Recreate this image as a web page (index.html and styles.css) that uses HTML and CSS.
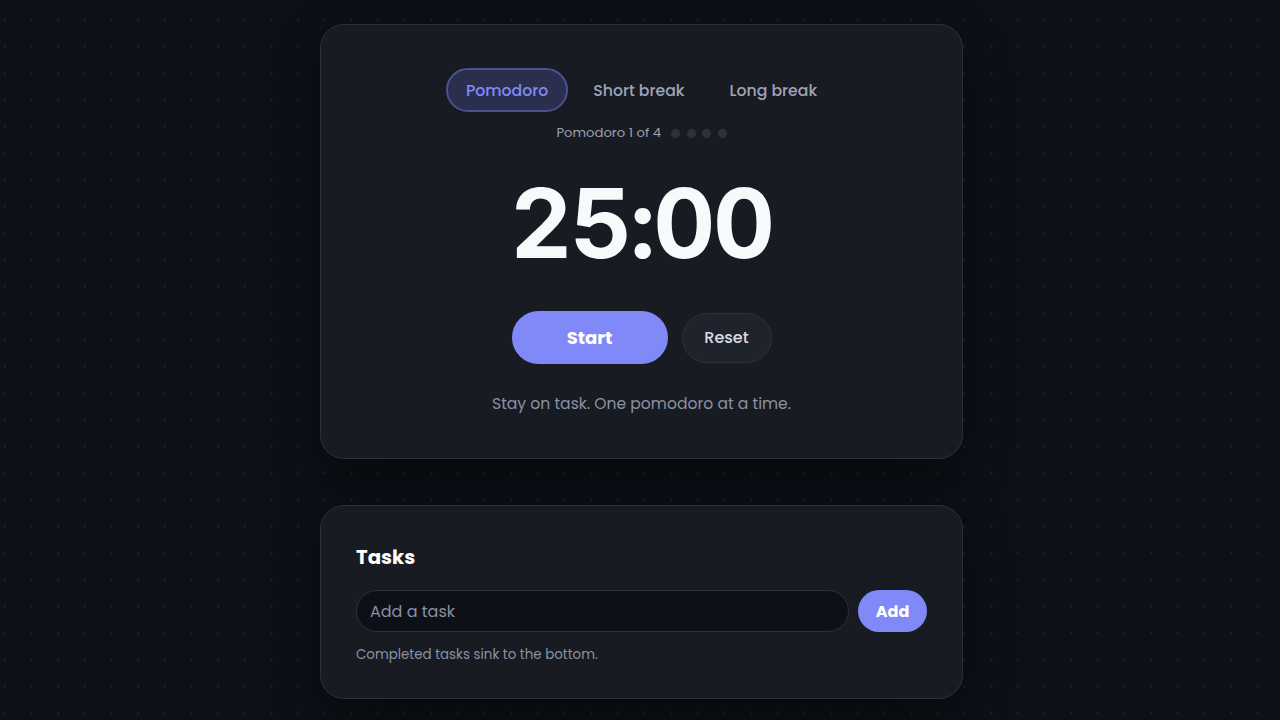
FILE: index.html
```html
<!DOCTYPE html>
<html lang="en">
<head>
<meta charset="utf-8">
<title>Pomodoro</title>
<link rel="stylesheet" href="styles.css">
</head>
<body>
<main class="page">
  <section class="card timer-card">
    <nav class="tabs">
      <button class="tab active">Pomodoro</button>
      <button class="tab">Short break</button>
      <button class="tab">Long break</button>
    </nav>
    <div class="progress">
      <span class="progress-label">Pomodoro 1 of 4</span>
      <span class="dots"><i class="dot"></i><i class="dot"></i><i class="dot"></i><i class="dot"></i></span>
    </div>
    <div class="time">25:00</div>
    <div class="controls">
      <button class="btn-start">Start</button>
      <button class="btn-reset">Reset</button>
    </div>
    <p class="tagline">Stay on task. One pomodoro at a time.</p>
  </section>

  <section class="card tasks-card">
    <h2 class="tasks-title">Tasks</h2>
    <form class="task-form">
      <input class="task-input" type="text" placeholder="Add a task">
      <button class="btn-add" type="button">Add</button>
    </form>
    <p class="hint">Completed tasks sink to the bottom.</p>
  </section>
</main>
</body>
</html>
```
FILE: styles.css
```css
* { box-sizing: border-box; }
html, body { margin: 0; padding: 0; }
body {
  min-height: 720px;
  background-color: #0d1017;
  background-image: radial-gradient(circle, #1f232c 0.9px, transparent 1.4px);
  background-size: 26.667px 26.667px;
  background-position: -8.33px 6.67px;
  font-family: "Poppins", "Inter", "Noto Sans", sans-serif;
  color: #e8eaf0;
  overflow: hidden;
}
.page {
  width: 643px;
  margin: 0 auto;
  padding: 24px 0 0;
  position: relative;
  left: 1.5px;
  display: flex;
  flex-direction: column;
  gap: 46px;
}
.card {
  background: #181b22;
  border: 1px solid #2c3039;
  border-radius: 24px;
  box-shadow: 0 18px 50px rgba(0, 0, 0, 0.45);
}
.timer-card {
  height: 435px;
  padding: 43px 35px 0;
  display: flex;
  flex-direction: column;
  align-items: center;
}
.tabs {
  display: flex;
  gap: 5px;
}
.tab {
  font: 500 15.7px "Poppins", "Inter", sans-serif;
  color: #9ea4b6;
  background: transparent;
  border: 2px solid transparent;
  border-radius: 999px;
  height: 44px;
  padding: 0 18px;
  cursor: pointer;
}
.tab.active {
  background: #2a2f4e;
  border-color: #4b5195;
  color: #8289f7;
}
.progress {
  margin-top: 13px;
  display: flex;
  align-items: center;
  gap: 10px;
  height: 16px;
}
.progress-label {
  font-size: 13.2px;
  color: #9aa0b2;
}
.dots { display: flex; gap: 6.5px; }
.dot {
  width: 9px;
  height: 9px;
  border-radius: 50%;
  background: #2e323c;
}
.time {
  margin-top: 23px;
  font-family: "Inter", sans-serif;
  font-weight: 700;
  font-size: 96px;
  line-height: 118px;
  letter-spacing: -2.3px;
  color: #f8f9fb;
  font-variant-numeric: tabular-nums;
}
.controls {
  margin-top: 29px;
  display: flex;
  align-items: center;
  gap: 14px;
}
.btn-start {
  width: 156px;
  height: 53px;
  border: none;
  border-radius: 999px;
  background: #8189f8;
  color: #ffffff;
  font: 700 18px "Poppins", "Inter", sans-serif;
}
.btn-reset {
  width: 90px;
  height: 50px;
  border: 1px solid #2e323b;
  border-radius: 999px;
  background: #1f232b;
  color: #dadde4;
  font: 500 16px "Poppins", "Inter", sans-serif;
}
.tagline {
  margin: 28px 0 0;
  font-size: 15.6px;
  color: #8b91a3;
}
.tasks-card {
  height: 194px;
  padding: 38px 35px 0;
}
.tasks-title {
  margin: 0;
  font-size: 19.7px;
  line-height: 26px;
  font-weight: 700;
  color: #ffffff;
}
.task-form {
  margin-top: 20px;
  display: flex;
  gap: 9px;
}
.task-input {
  flex: 1;
  height: 42px;
  background: #0d1017;
  border: 1px solid #2b2f38;
  border-radius: 999px;
  padding: 0 13px;
  font: 400 16px "Poppins", "Inter", sans-serif;
  color: #e8eaf0;
  outline: none;
}
.task-input::placeholder { color: #8b91a3; }
.btn-add {
  width: 69px;
  height: 42px;
  border: none;
  border-radius: 999px;
  background: #8189f8;
  color: #ffffff;
  font: 700 16px "Poppins", "Inter", sans-serif;
}
.hint {
  margin: 13px 0 0;
  font-size: 13.4px;
  color: #8b91a3;
}
```
